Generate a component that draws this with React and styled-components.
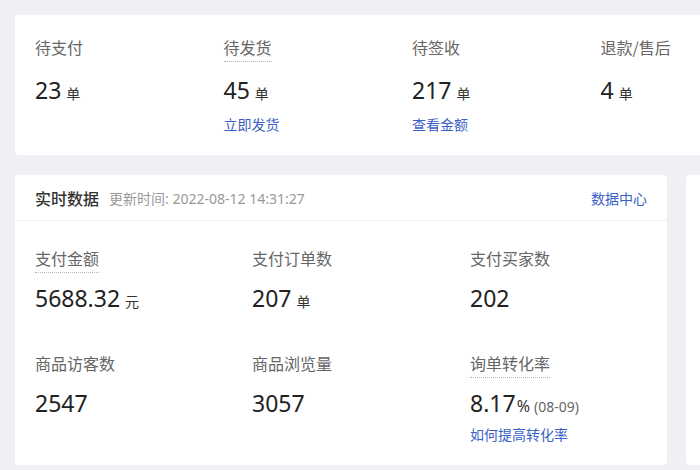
import React from "react";
import styled, { createGlobalStyle } from "styled-components";

const Global = createGlobalStyle`
  html, body { margin: 0; padding: 0; background: #eef0f3; overflow: hidden; }
  body { font-family: "Noto Sans", "Noto Sans CJK SC", sans-serif; }
`;

const Page = styled.div`
  padding: 15px;
  width: 1100px;
  display: flex;
  flex-direction: column;
  gap: 20px;
`;

const Card = styled.div`
  background: #fff;
  border-radius: 4px;
  box-sizing: border-box;
`;

const OrderCard = styled(Card)`
  width: 1000px;
  height: 140px;
  display: flex;
  padding: 20px 20px 0;
`;

const OrderItem = styled.div`
  width: 188.5px;
  display: flex;
  flex-direction: column;
  align-items: flex-start;
`;

const Label = styled.span`
  font-size: 16px;
  line-height: 24px;
  color: #666;
  font-family: "Noto Sans CJK SC", sans-serif;
  padding-bottom: 2px;
  border-bottom: 1px ${(p) => (p.$dotted ? "dotted #b5b5b5" : "solid transparent")};
`;

const Value = styled.div`
  margin-top: ${(p) => p.$gap ?? 12}px;
  font-size: 23px;
  line-height: 32px;
  color: #222;
  display: flex;
  align-items: baseline;
  white-space: nowrap;
`;

const Unit = styled.span`
  font-size: 14px;
  color: #333;
  margin-left: 5px;
  font-family: "Noto Sans CJK SC", sans-serif;
`;

const Pct = styled.span`
  font-size: 16px;
  color: #333;
  margin-left: 1px;
`;

const Note = styled.span`
  font-size: 14px;
  color: #666;
  margin-left: 4px;
`;

const Link = styled.a`
  margin-top: ${(p) => p.$gap ?? 5}px;
  font-size: 14px;
  line-height: 20px;
  color: #3b5fc4;
  text-decoration: none;
  font-family: "Noto Sans CJK SC", sans-serif;
`;

const Row = styled.div`
  display: flex;
  gap: 19px;
`;

const DataCard = styled(Card)`
  width: 652px;
  height: 290px;
  flex-shrink: 0;
  display: flex;
  flex-direction: column;
`;

const SideCard = styled(Card)`
  width: 400px;
  height: 290px;
  flex-shrink: 0;
`;

const Header = styled.div`
  height: 46px;
  box-sizing: border-box;
  border-bottom: 1px solid #eef0f3;
  display: flex;
  align-items: center;
  padding: 0 20px;
  font-family: "Noto Sans CJK SC", sans-serif;
`;

const Title = styled.span`
  font-size: 16px;
  font-weight: 500;
  color: #333;
`;

const Updated = styled.span`
  font-size: 14px;
  color: #999;
  margin-left: 10px;
  font-family: "Noto Sans", "Noto Sans CJK SC", sans-serif;
`;

const HeaderLink = styled.a`
  margin-left: auto;
  font-size: 14px;
  color: #3b5fc4;
  text-decoration: none;
`;

const Grid = styled.div`
  display: grid;
  grid-template-columns: 217px 218px 1fr;
  row-gap: 34px;
  padding: 25px 20px 0;
`;

const Metric = styled.div`
  display: flex;
  flex-direction: column;
  align-items: flex-start;
`;

const orders = [
  { label: "待支付", value: "23" },
  { label: "待发货", value: "45", dotted: true, link: "立即发货" },
  { label: "待签收", value: "217", link: "查看金额" },
  { label: "退款/售后", value: "4" },
];

export default function App() {
  return (
    <>
      <Global />
      <Page>
        <OrderCard>
          {orders.map((o) => (
            <OrderItem key={o.label}>
              <Label $dotted={o.dotted}>{o.label}</Label>
              <Value>
                {o.value}
                <Unit>单</Unit>
              </Value>
              {o.link && <Link href="#">{o.link}</Link>}
            </OrderItem>
          ))}
        </OrderCard>
        <Row>
          <DataCard>
            <Header>
              <Title>实时数据</Title>
              <Updated>更新时间: 2022-08-12 14:31:27</Updated>
              <HeaderLink href="#">数据中心</HeaderLink>
            </Header>
            <Grid>
              <Metric>
                <Label $dotted>支付金额</Label>
                <Value $gap={9}>
                  5688.32<Unit>元</Unit>
                </Value>
              </Metric>
              <Metric>
                <Label>支付订单数</Label>
                <Value $gap={9}>
                  207<Unit>单</Unit>
                </Value>
              </Metric>
              <Metric>
                <Label>支付买家数</Label>
                <Value $gap={9}>202</Value>
              </Metric>
              <Metric>
                <Label>商品访客数</Label>
                <Value $gap={9}>2547</Value>
              </Metric>
              <Metric>
                <Label>商品浏览量</Label>
                <Value $gap={9}>3057</Value>
              </Metric>
              <Metric>
                <Label $dotted>询单转化率</Label>
                <Value $gap={9}>
                  8.17<Pct>%</Pct>
                  <Note>(08-09)</Note>
                </Value>
                <Link href="#" $gap={1}>如何提高转化率</Link>
              </Metric>
            </Grid>
          </DataCard>
          <SideCard />
        </Row>
      </Page>
    </>
  );
}
